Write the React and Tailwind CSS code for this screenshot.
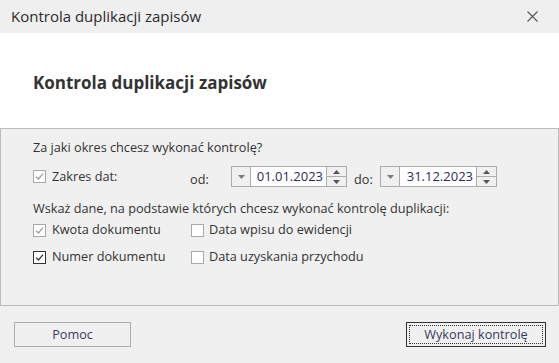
import React from "react";

function Check({ checked, dark }) {
  return (
    <span
      className={`flex h-[13px] w-[13px] shrink-0 items-center justify-center border bg-white ${
        dark ? "border-[#333333]" : "border-[#a8a8a8]"
      }`}
    >
      {checked && (
        <svg width="9" height="9" viewBox="0 0 9 9">
          <path
            d="M1 4.6 L3.4 7 L8 1.6"
            fill="none"
            stroke={dark ? "#333333" : "#9a9a9a"}
            strokeWidth="1.2"
          />
        </svg>
      )}
    </span>
  );
}

function DateBox({ value, width }) {
  return (
    <div className={`flex h-[21px] border border-[#acacac] bg-white ${width}`}>
      <div className="flex w-[19px] items-center justify-center border-r border-[#acacac] bg-[#f0f0f0]">
        <svg width="7" height="4" viewBox="0 0 7 4">
          <path d="M0 0 H7 L3.5 4 Z" fill="#7a7a7a" />
        </svg>
      </div>
      <div className="flex flex-1 items-center justify-end pr-[3px] text-[13px] text-[#2b2b55]">
        {value}
      </div>
      <div className="flex w-[20px] flex-col border-l border-[#acacac] bg-[#f0f0f0]">
        <div className="flex flex-1 items-center justify-center border-b border-[#acacac]">
          <svg width="7" height="4" viewBox="0 0 7 4">
            <path d="M0 4 H7 L3.5 0 Z" fill="#555555" />
          </svg>
        </div>
        <div className="flex flex-1 items-center justify-center">
          <svg width="7" height="4" viewBox="0 0 7 4">
            <path d="M0 0 H7 L3.5 4 Z" fill="#555555" />
          </svg>
        </div>
      </div>
    </div>
  );
}

export default function App() {
  return (
    <div
      className="flex h-[363px] w-[559px] flex-col bg-[#f0f0f0] text-[#333333]"
      style={{ fontFamily: '"Open Sans", "Noto Sans", sans-serif' }}
    >
      <div className="flex h-[33px] items-center justify-between bg-[#efefef] pl-[11px] pr-[21px]">
        <span className="text-[15px] text-[#2b2b2b]">Kontrola duplikacji zapisów</span>
        <svg width="11" height="11" viewBox="0 0 11 11">
          <path d="M0.5 0.5 L10.5 10.5 M10.5 0.5 L0.5 10.5" stroke="#555555" strokeWidth="1.1" />
        </svg>
      </div>

      <div className="flex h-[95px] items-center bg-white pl-[33px]">
        <span className="pt-[4px] text-[17px] font-bold text-[#333333]">
          Kontrola duplikacji zapisów
        </span>
      </div>

      <div className="flex h-[178px] flex-col border border-[#bcbcbc] pl-[32px] pt-[10px] text-[12.7px]">
        <div className="flex h-[18px] items-center">Za jaki okres chcesz wykonać kontrolę?</div>

        <div className="mt-[9px] flex h-[21px] items-center">
          <Check checked />
          <span className="ml-[6px] w-[138px]">Zakres dat:</span>
          <span className="w-[41px] pt-[7px]">od:</span>
          <DateBox value="01.01.2023" width="w-[116px]" />
          <span className="ml-[7px] w-[26px] pt-[7px]">do:</span>
          <DateBox value="31.12.2023" width="w-[117px]" />
        </div>

        <div className="mt-[13px] flex h-[18px] items-center">
          Wskaż dane, na podstawie których chcesz wykonać kontrolę duplikacji:
        </div>

        <div className="mt-[3px] flex h-[18px] items-center">
          <div className="flex w-[158px] items-center">
            <Check checked />
            <span className="ml-[6px]">Kwota dokumentu</span>
          </div>
          <Check />
          <span className="ml-[5px]">Data wpisu do ewidencji</span>
        </div>

        <div className="mt-[9px] flex h-[18px] items-center">
          <div className="flex w-[158px] items-center">
            <Check checked dark />
            <span className="ml-[6px]">Numer dokumentu</span>
          </div>
          <Check />
          <span className="ml-[5px]">Data uzyskania przychodu</span>
        </div>
      </div>

      <div className="flex items-start justify-between pl-[14px] pr-[13px] pt-[16px] text-[12.7px]">
        <button className="flex h-[25px] w-[117px] items-center justify-center border border-[#adadad] bg-[#f0f0f0] pt-[1px] text-[#3a3a5c]">
          Pomoc
        </button>
        <button className="flex h-[25px] w-[140px] items-center justify-center border border-[#333333] bg-[#f0f0f0] p-[2px] text-[#3a3a5c]">
          <span className="flex h-full w-full items-center justify-center border border-dotted border-[#333333] pt-[1px]">
            Wykonaj kontrolę
          </span>
        </button>
      </div>
    </div>
  );
}
